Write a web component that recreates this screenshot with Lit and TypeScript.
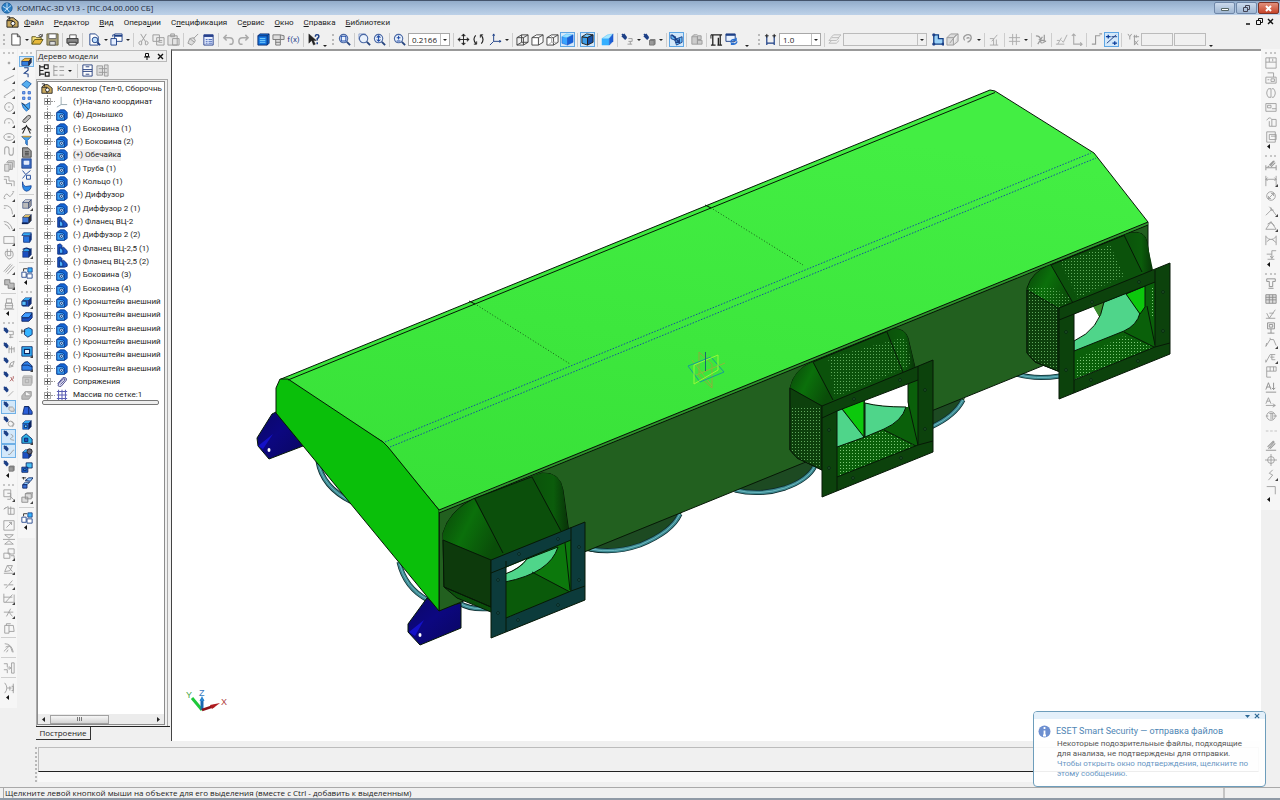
import { LitElement, html, svg, css, nothing } from "lit";
import { customElement } from "lit/decorators.js";
import { classMap } from "lit/directives/class-map.js";

const G = "#9a9a9a";
const K = "#222";
const N = "#1c3f86";
const D = "#1c4fc0";
const L = "#35b4ff";

const p = (d: string, stroke = G, fill = "none", w = 1) =>
  svg`<path d=${d} stroke=${stroke} fill=${fill} stroke-width=${w}></path>`;

/* Solid in three shades: front, top and side faces. */
const solid = (front = D, top = L, side = "#12307c") =>
  svg`${p("M2 5h7v7H2z", "#0c2460", front, 0.6)}${p("M2 5l3-3h7l-3 3z", "#0c2460", top, 0.6)}${p("M9 5l3-3v7l-3 3z", "#0c2460", side, 0.6)}`;

const pin = svg`${p("M1 1l5 5M1 3l4 4M3 1l3 4", N, "none", 1.6)}`;

const loupe = (inner = "") =>
  svg`<circle cx="6" cy="6" r="4.5" stroke="#4a68a4" fill="#e9f1fc" stroke-width="1.2"></circle>${p("M9.500 9.500L13 13", "#27457f", "none", 2)}${inner ? p(inner, "#1f4ba8", "none", 1.1) : nothing}`;

const ICONS: Record<string, unknown> = {
  "new": p("M3 1h6l3 3v9H3zM9 1v3h3", "#444", "#fff"),
  "open": svg`${p("M1 12V4h4l1 1h5v2", "#5d5418", "#f8e27a")}${p("M1 12l3-5h9l-3 5z", "#5d5418", "#e8b93a")}${p("M8 3q3-3 4 0M12 1v3h-3", "#333")}`,
  "save": svg`${p("M1 1h12v12H1z", "#6a6238", "#a9a27c")}${p("M3 1h8v5H3z", "#666", "#fff")}${p("M4 9h6v4H4z", "#555", "#ddd")}`,
  "print": svg`${p("M4 6V2h7v4", "#555", "#fff")}${p("M1 6h12v5H1z", "#333", "#888")}${p("M3 10h8v3H3z", "#333", "#ddd")}`,
  "preview": svg`${p("M2 1h6l3 3v9H2z", N, "#fff")}<circle cx="7.500" cy="7.500" r="3" stroke=${N} fill="#bfe0ff"></circle>${p("M10 10l3 3", N, "none", 2)}`,
  "manager": svg`${p("M5 1h8v8H5z", N, "#fff")}${p("M5 3h8", N, "none", 2)}${p("M1 6h6v7H1z", N, "#e3edff")}${p("M3 4V2h2", N)}`,
  "cut": p("M4 1l5 8M10 1L5 9M5 9a2 2 0 1 0 0 3.500zM9 9a2 2 0 1 1 0 3.500z"),
  "copy": p("M1 2h7v7H1zM5 5h8v8H5zM7 8h4M7 10h4", G, "#eee"),
  "paste": p("M1 3h10v10H1zM4 1h4v3H4zM6 6h7v7H6z", G, "#e4e4e4"),
  "brush": p("M12 1L7 6M3 6l5 4-3 3-4-2zM3 6l4-1 2 3-1 2", G, "#ddd"),
  "props": svg`${p("M2 2h10v11H2z", "#26408c", "#e6eeff")}${p("M2 3h10", "#26408c", "none", 2.5)}${p("M4 7h2M7 7h4M4 9h2M7 9h4M4 11h2M7 11h4", "#4a68b8")}`,
  "undo": p("M5 2L2 5l3 3M2 5h6q4 0 4 4t-4 3", "#aaa", "none", 1.6),
  "redo": p("M9 2l3 3-3 3M12 5H6Q2 5 2 9t4 3", "#aaa", "none", 1.6),
  "libs": svg`${p("M1 3l2-2h10v10l-2 2H1z", "#0a2a70", "#1577e0")}${p("M1 3h10v10M11 3l2-2", "#0a2a70")}${p("M3 6h6M3 8h6M3 10h6", "#7fd4ff")}`,
  "vars": p("M1 2h8v5H1zM9 2l4 1v4H9M4 7v6h5V7M4 10h5", "#777", "#ddd"),
  "help": svg`${p("M2 1v10l3-3 2 5 2-1-2-4h3z", K, K, 0.5)}${p("M9 4q0-3 3-2 2 2-1 4v2M11 10v2", N, "none", 1.6)}`,
  "zsel": loupe("M3.500 3.500h5v5h-5z"),
  "zwin": svg`${p("M1 1h7v6H1z", "#8aa2d0")}${loupe()}`,
  "zall": loupe("M6 3v6M4 5l2-2 2 2M4 7l2 2 2-2"),
  "zin": loupe("M6 3v4M4 5h4M4 8.500h4"),
  "move": svg`${p("M7 1v12M1 7h12", K)}${p("M5 3l2-2 2 2zM5 11l2 2 2-2zM3 5L1 7l2 2zM11 5l2 2-2 2z", K, K, 0.6)}`,
  "orbit": svg`${p("M4 2.500Q0 7 4.500 12M9.500 2Q14 6.500 10 11.500", K, "none", 1.2)}${p("M2 12h3v-3M12 2H9v3", K)}`,
  "axes": svg`${p("M5 1v8h8M5 9l-4 4", N)}${p("M4 3l1-2 1 2M11 8l2 1-2 1", N)}`,
  "wire": p("M1 5h7v8H1zM1 5l5-3h7l-5 3M13 2v8l-5 3M6 2v8h7M6 10l-5 3", "#444"),
  "hid": p("M1 5h7v8H1zM1 5l5-3h7l-5 3M13 2v8l-5 3", "#444", "#fff"),
  "thin": svg`${p("M1 5h7v8H1zM1 5l5-3h7l-5 3M13 2v8l-5 3", "#444", "#fff")}${p("M6 3v7h6M6 10l-4 3", "#aaa")}`,
  "shade": svg`${p("M1 4l6 1v8l-6-2z", D, "#39a4ff", 0.5)}${p("M1 4l5-3 7 1-6 3z", L, "#9be1ff", 0.5)}${p("M7 5l6-3v8l-6 3z", D, "#1560d8", 0.5)}`,
  "shadew": svg`${p("M1 4l6 1v8l-6-2z", K, "#3d9de8")}${p("M1 4l5-3 7 1-6 3z", K, "#6fc6ff")}${p("M7 5l6-3v8l-6 3z", K, "#1450a8")}`,
  "persp": svg`${p("M1 6h8v7H1z", L, "#36b0ff", 0.4)}${p("M1 6l6-4 6-1-4 5z", L, "#a5e8ff", 0.4)}${p("M9 6l4-5v8l-4 4z", D, "#1c5fd6", 0.4)}`,
  "objs": svg`${pin}${p("M8 6h4v3H8M10 9v3M7 12h5", G)}`,
  "objs2": svg`${pin}${p("M7 8h5v5H7zM7 8l1-1h5v5l-1 1", "#777", "#999")}`,
  "simp": svg`${p("M1 2l5 2v4L1 6zM5 7l8-3v6l-6 3z", N, "#65b9f5")}${p("M2 2l8 8M10 6v4H6", N, "none", 1.5)}`,
  "drill": p("M2 4h6v8H2zM8 3h4v4H8zM8 8h5v4H8zM2 4l2-2h4", G, "#ccc"),
  "report": svg`${p("M1 2h12M3 2v11M1 13h5M9 5v8M8 13h5M11 2v11", K, "none", 1.4)}${p("M1 2v4", K)}`,
  "refresh": svg`${p("M1 1h10v8H1z", N, "#e8f2ff")}${p("M1 2h10", N, "none", 2)}${p("M6 10q1-4 6-3M13 9q-1 4-6 3M12 5v3h-3M7 13v-2h3", "#2a70d0", "none", 1.4)}`,
  "step": svg`${p("M3 3v10M11 3v10M3 11h8", N, "none", 1.3)}${p("M1 3h4M3 1v4M9 3h4M11 1v4", K)}`,
  "layers": p("M1 8l3-3h8l-3 3zM1 11l3-3M1 11h8l3-3M3 5l3-3h8l-3 3", "#b8b8b8"),
  "sketch": svg`${p("M3 2v10h10V6H8V2z", "#123f86", "#9cd2f7", 1.4)}${p("M2 1h2v2H2zM2 11h2v2H2zM12 11h2v2h-2z", N, N)}`,
  "sk2": p("M1 5h7v8H1zM1 5l4-4h8l-5 4M13 1v8l-5 4M4 11l7-9", G, "#ddd"),
  "clip": p("M4 8q-3-4 2-6 5-1 5 3 0 3-4 5M6 6q2-2 3 0", G, "none", 1.4),
  "ortho": p("M4 9l6-7M2 6h4v7M2 13h9M9 7v6", "#aaa"),
  "grid": p("M5 1v12M9 1v12M1 5h12M1 9h12", "#aaa"),
  "snap": p("M1 3q5 0 5 5t5 1M3 12l5-8M10 2v6h-4M4 7l8 2", G, "none", 1.3),
  "lcs": p("M1 12h9M3 12l4-7M7 8l2 2 4-8M2 8h3", "#aaa"),
  "lcs2": p("M4 1v11h9M2 3l2-2 2 2M11 10l2 2-2 2", "#aaa", "none", 1.2),
  "round": p("M2 12h4V3h5M10 1h3", G, "none", 1.2),
  "cursor": svg`${p("M1 4h5M3.500 2v4M8 11h5M10.500 9v4", "#0d3f9c", "none", 1.4)}${p("M2 11L12 2M7 4h6", N)}`,
  "xy": p("M1 1l2 3 2-3M3 4v3M8 2v11M10 2v3M7 4h6M8 8l4 5M12 8l-4 5", "#999"),
  // drawing tools
  "point": p("M6 6h2v2H6z", G, G, 0.6), "line": p("M1 10L13 4"), "seg": p("M1 11L12 4M1 12h2M11 3h2v2"),
  "circle": svg`<circle cx="7" cy="7" r="5" stroke=${G} fill="none"></circle>${p("M6 7h2")}`,
  "arc": p("M2 9Q1 3 7 3q5 1 5 6M6 8h2"), "ell": svg`<ellipse cx="7" cy="7" rx="6" ry="4" stroke=${G} fill="none"></ellipse>${p("M5 7h4M7 6v2")}`,
  "spl": p("M2 11V5q0-3 2.500-3T7 5v4q0 3 2.500 3T12 9V3", "#a4a4a4", "none", 1.2), "book": p("M2 5h5v8H2zM5 3h6v8H7M4 3l2-2h7v8M9 5v6", G, "#ddd"),
  "offs": p("M1 2h6v5h6v6M1 5h3v5h6v3"), "wave": p("M1 9q3-7 5-3t6-3M1 10h2M11 2h2"), "fil": p("M1 2h4q6 2 6 10M1 5h2"),
  "fil2": p("M1 3q7 0 10 9M2 6q4 1 6 6"), "rect": p("M1 3h12v8H1z"), "hatch": p("M3 4h8q3 7-4 9Q1 9 3 4M5 1v8M9 1v8M5 9h4"),
  "par": p("M1 10L9 1M5 13l8-9M3 11l8-9"), "uni": p("M2 2h6v4h5v6H6V8H2z", "#777", "#bbb"), "stamp": p("M4 1h6v5H4zM2 9h10M3 6h8v6H3zM1 13h12"),
  // snaps
  "p1": svg`${pin}${p("M7 5h5v4H7M9 9v4M7 12h5")}`, "p2": svg`${pin}${p("M7 5v8M10 5v8M13 6v6M7 8h6")}`,
  "p3": svg`${pin}${p("M7 12l2-5 4-2-2 6zM8 9l4 2")}`, "p4": svg`${pin}${p("M8 12l3-3M9 7l3 5M12 6v3", "#a55")}`,
  "p5": svg`${pin}${p("M6 12L12 6", "#aaa")}`, "p6": svg`${pin}${p("M7 7h4l2 2v3H9l-2-2z", G, "#ddd")}`,
  "p7": svg`${pin}<circle cx="9" cy="9" r="3" stroke=${G} fill="none"></circle>${p("M9 6l4 3-2 4")}`,
  "p8": svg`${pin}${p("M9 5q5 2 1 4t3 3", G)}`, "p9": svg`${pin}${p("M6 11h2l4-5h1")}`,
  // editing
  "e1": p("M1 1h8v8H1zM5 5h4v7H5M8 8l5 5"), "e2": p("M1 6l5-3v9M6 5h7v7H6M1 6l2-2M9 3v9"), "e3": p("M1 2h12v11H1zM4 10l6-6M7 4h3v3"),
  "e4": p("M2 2h10L7 6zM2 13h10L7 9zM0 7.500h14"), "e5": p("M6 1h7v6H6zM1 6h7v6H1zM9 9h4v4"), "e6": p("M1 12h12M2 10l3-7h6L8 9zM5 3l6 7"),
  "e7": p("M1 8h4M7 8h5M3 12l8-9"), "e8": p("M1 2v10h12M3 12L11 3M13 3v9M1 6h10"), "e9": p("M1 6h11M4 11l5-9M7 6l4 5"),
  "e10": p("M2 4h5v9H2zM7 4h5l1 7H7M4 4V2h5"), "e11": p("M2 2q8 0 10 10M3 6q4-3 6 0l2 6M1 11l6-6M6 9l-2 3"), "e12": p("M1 2h4v4M1 9h4v4M5 7h4M10 1v12h3V1zM7 5l2 2-2 2"),
  "e13": p("M2 1q5 6 0 12M5 7h5M8 5v5M10 5h2v5h-2M12 2v11"),
  // modelling
  "asm": svg`${p("M1 6l4-3h8l-3 4H1z", "#805a10", "#f0b840")}${p("M1 7h9v5H1z", N, "#3380e0")}${p("M10 7l3-4v5l-3 4z", K, "#1d3a80")}`,
  "crv": p("M4 1h5v3L4 8l5 1v4", N, "none", 1.3), "srf": p("M1 7l6-5 6 4-5 6z", "#1450a0", "#55aef0"),
  "arr": svg`${p("M2 2h3v3H2zM9 2h3v3H9zM2 9h3v3H2zM9 9h3v3H9z", "#2d62c8", "#7baaf0")}`,
  "aux": svg`${p("M1 3l5 2 5-3v7l-4 4-4-4z", "#1058b0", "#48a8f4")}${p("M1 2l9 9", K)}`,
  "mate": p("M3 9l6-6q4-1 3 3l-6 6q-4 1-4-2l6-6", "#555", "#bbb", 1.2), "meas": p("M2 12l5-10 5 10M1 7l6-4 6 5", K, "none", 1.3),
  "filt": svg`${p("M1 2h12L8 7v6l-2-2V7z", "#1450a0", "#42a5f5")}${p("M2 2h10", "#b94", "none", 2)}`,
  "doc": p("M2 1h7l4 4v8H2zM5 6h5M5 8h5M5 10h5", "#333", "#999"), "spec": svg`${p("M1 1h12v12H1z", N, "#3b6ac0")}${p("M4 4h6v4H4z", "#fff", "#dfeaff")}`,
  "elem": p("M2 2l4 5-4 5M6 7l6-5M7 8h5v5H7z", "#234b9a", "none", 1.2), "sheet": svg`${p("M2 1q0 5 4 6l7-1q0 6-6 7-6-1-5-12z", "#0d3a90", "#2e8ce8")}`,
  "s0": solid("#bbb", "#ddd", "#999"), "s1": svg`${solid("#3f78d8", "#f0d070", "#333")}${p("M1 12h7", "#0b2055", "none", 2)}`,
  "s2": svg`${p("M3 1h9l-2 3H1z", N, L)}${p("M3 5h7v7H3z", N, "#2874e0")}${p("M10 5l2-3v7l-2 3z", N, "#12307c")}`,
  "s3": svg`${solid()}${p("M2 3q5-4 9 1v3", "#0a2a70", "none", 1.4)}`, "s4": svg`${p("M1 6h5v6H1zM7 8h6v5H7z", N, "#fff")}${p("M8 1h5v5H8z", N, L)}${p("M3 5V2h4", K)}`,
  "s5": svg`${solid()}${p("M1 6h5v5H1z", "#0c2460", "#58c0ff")}`, "s6": svg`${p("M1 6l4-4h8l-3 6H1z", "#0c2460", "#3f9cff")}${p("M1 8h8l4-5v5l-4 4H1z", "#0c2460", "#1d50c0")}`,
  "s7": svg`${p("M4 4l5-2 4 2v6l-5 3-4-3z", "#0c2460", L)}${p("M1 6h4M1 4v5", K)}`, "s8": svg`${p("M1 2h12v11H1z", "#0c2460", L)}${p("M4 5h6v5H4z", "#0c2460", "#eaf6ff", 1.4)}`,
  "s9": svg`${p("M1 12V6q3-5 7-4l5 5v5z", "#0c2460", "#2f80e8")}${p("M1 6h7l5 2", "#0c2460")}`, "s10": p("M2 3h10v9H2zM5 5h4v4H5zM2 3l1-2h10v9", "#aaa", "#ccc"),
  "s11": p("M1 8l4-5h7v5l-3 4H1zM5 3v5h7", "#999", "#bbb"), "s12": svg`${p("M2 12l2-9h5l4 6v3z", "#0c2460", "#2b5fd8")}${p("M4 3h5v9", "#0c2460")}`,
  "s13": svg`${solid("#1c78e8", L, "#0c2460")}${p("M4 7h3v3H4z", "#0c2460", "#7fe0ff")}`, "s14": svg`${p("M1 12V5l5-4 7 6v5z", "#0c2460", "#2fb4e8")}${p("M4 6h4v4H4z", "#0c2460", "#1c4fc0")}`,
  "s15": svg`${solid()}<circle cx="10" cy="4" r="3" stroke="#222" fill="#667"></circle>`, "s16": svg`${p("M6 1h7v6H6z", "#0c2460", "#4bc0f5")}${p("M1 6h7v6H1z", "#0c2460", "#1f66d8")}${p("M3 8h3v2H3z", "#0c2460", L)}`,
  "s17": svg`${p("M5 4l4-3h5l-3 4zM2 9l3-3h5l-3 3z", "#0c2460", "#8cc8ff")}${p("M2 9h5v4H2z", "#0c2460", "#3a70d8")}${p("M1 1h5M3 0v3", K)}`,
  "s18": p("M5 2h7v6H5zM1 6h7v6H1zM5 2l2-1h7v6", "#888", "#ddd"),
  // annotation
  "a1": p("M1 1h12v12H1zM1 6h12M5 1v5M9 2v3"), "a2": p("M1 6h12v7H1zM3 1h7v5M7 8h4v3H7zM3 9h2"), "a3": p("M4 2Q0 7 4 12h3V2zM8 2h2q4 5 0 10H8"),
  "a4": p("M1 3h12v9H1zM3 5h4v3H3zM8 9h5"), "a5": p("M2 5q3-5 6-1v8H5V6M8 4h5v8H8"), "a6": p("M2 1h10v12H2zM5 4h8v6H5zM7 6h6"),
  "b1": p("M1 9h12M1 6v6M13 6v6M3 8l2-1M6 7l5-6M7 8l5-5M5 6l5-5", "#999", "none", 1.2), "b2": p("M1 1v12M13 1v12M1 5h12M3 3L1 5l2 2M11 3l2 2-2 2"),
  "b3": svg`<circle cx="7" cy="7" r="5" stroke=${G} fill="none"></circle>${p("M4 10l6-6M4 7v3h3M7 4h3v3")}`, "b4": p("M1 12l7-7 5 7M8 5L5 2M7 3v3h3"),
  "b5": p("M1 12l6-9 6 9M1 12h12M3 6q4-4 8 2"), "b6": p("M1 2v11M13 2v11M1 3q6 7 12 0M2 9l4-3M8 6l5 4"), "b7": p("M8 2v9M8 11l-2-3M8 11l2-3M3 12h8M8 2h5M2 6h6"),
  "c1": p("M2 1h10v3H9v6H5V4H2zM4 12h6", "#888"), "c2": p("M1 2h12v10H1zM1 5h12M1 8h12M5 2v10M9 2v10", "#888", "#ddd"), "c3": p("M2 6l3 6 7-10M1 12h11M5 6h5"),
  "c4": p("M3 1h8v7H3zM5 3h4v3H5zM7 8v5M3 13h8", "#888"), "c5": p("M1 11l5-8h4l3 7M1 11l1-4M6 3V1"), "c6": p("M1 12l5-9h6M1 12V9M6 6h5M8 3v6h4"),
  "c7": p("M2 1v12M2 1h11v5H2M6 1v5M10 1v5M2 13h5"), "c8": p("M1 10l3-8 3 8M2 7h4M10 2v8M8 8l2 2 2-2M1 13h12", "#888"), "c9": p("M1 9l3-7 3 7M2 6h4M1 11h11M9 9l3 2-3 2", "#999"),
  "c10": svg`<circle cx="7" cy="7" r="5" stroke=${G} fill="none"></circle>${p("M1 7h3M7 4v7M9 4v7M5 4h5M10 7h4")}`,
  "dash": p("M1 7h3M6 7h3M11 7h3", "#bbb"),
  "d1": p("M1 12h12M4 10l7-8M6 10l6-6M3 8l7-7", "#999", "none", 1.3), "d2": svg`<circle cx="7" cy="7" r="4" stroke=${G} fill="none"></circle>${p("M7 0v14M0 7h14")}`,
  "d3": p("M9 1L5 5l4 2-5 6", "#999"), "d4": p("M2 3h10v9"),
  // model tree
  "pan1": p("M3 1v12M3 3h5M3 7h4M3 11h5M8 1h4v4H8zM9 9h4v4H9z", "#222", "none", 1.3), "pan2": p("M2 1v12M2 3h4M2 7h4M2 12h4M8 3h5M8 7h5M8 12h5", "#999"),
  "pan3": svg`${p("M2 1h10v12H2z", "#27407e", "#fff")}${p("M2 6h10M2 8h10M5 3h4M5 11h4", "#27407e")}`, "pan4": p("M1 2h6v10H1zM9 1h4v12H9zM3 5h9M3 9h9", "#999", "#ddd"),
  "root": svg`${p("M1 12V5q2-4 7-3l5 4v6z", "#222", "#c9a95e")}${p("M1 5h6v7", "#222")}<circle cx="7.500" cy="8" r="2.200" stroke="#222" fill="#fff"></circle>${p("M1 1h3v3", "#222")}`,
  "origin": p("M6 1v9h7M6 10l-5 3", "#8fa0a8"),
  "part": svg`${p("M1 4l4-3h5l3 3v7l-3 2H1z", "#0b3a90", "#1566d6")}${p("M1 4h6l3 2v7H1z", "#0b3a90", "#3aa2f7")}<circle cx="6.500" cy="8.500" r="2.300" stroke="#0a2c78" fill="#bfe6ff"></circle><circle cx="6.500" cy="8.500" r=".8" fill="#0a2c78"></circle>`,
  "flange": svg`${p("M2 2l3-1 2 2v3l2-1 4 4v3l-3 1H2z", "#0a2c78", "#1a55c8")}${p("M4 5l4 3v4H4z", "#0a2c78", "#4cb0fa")}`,
  "mates": p("M2 9l6-7q5-1 4 3l-6 7q-5 1-3-3l6-6q2 0 1 2l-5 5", "#44468a", "#e6e4f6", 1.1),
  "mass": p("M3 1v12M7 1v12M11 1v12M1 3h12M1 7h12M1 11h12", "#5a5fb4", "none", 1.2),
};

const icon = (name: string, size = 14) =>
  html`<svg class="ico" width=${size} height=${size} viewBox="0 0 14 14" aria-hidden="true">${ICONS[name]}</svg>`;

const BASE = css`
  * { box-sizing: border-box; }
  button, input, select {
    font: inherit; color: inherit; margin: 0; padding: 0; border: 0; background: none; border-radius: 0;
  }
  .ico { display: block; flex: none; }
`;

/** A vertical strip of tool buttons. Groups are separated by "|", "<" (more) and ":" (grip). */
@customElement("tool-column")
class ToolColumn extends LitElement {
  static properties = { layout: { type: String }, label: { type: String } };
  declare layout: string;
  declare label: string;

  static styles = [BASE, css`
    :host { display: block; }
    .col { display: flex; flex-direction: column; align-items: stretch; padding: 1px 1px 4px; background: #f6f6f6; }
    .grip { height: 6px; display: flex; align-items: center; justify-content: center; }
    .grip::before { content: ""; width: 11px; border-top: 2px dotted #c6c6c6; }
    .line { height: 5px; display: flex; align-items: center; }
    .line::before { content: ""; flex: 1; border-top: 1px solid #cfcfcf; }
    .more { height: 9px; display: flex; align-items: flex-start; padding: 0 0 0 5px; }
    .set { display: flex; flex-direction: column; }
    .tool { flex: 1 1 0; min-height: 0; display: grid; place-items: center; position: relative; }
    .tool .ico { width: 12px; height: 12px; }
    .small .ico { width: 11px; height: 11px; }
    .on { background: #d3e8fa; outline: 1px solid #6fb0e6; outline-offset: -1px; }
    .sub::after {
      content: ""; position: absolute; right: 1px; bottom: 1px;
      border-left: 3px solid transparent; border-bottom: 3px solid #444;
    }
  `];

  render() {
    const parts = this.layout.split(/\s+(?=[|<:])|(?<=[|<:])\s+/);
    return html`<div class="col" role="toolbar" aria-orientation="vertical" aria-label=${this.label}>
      ${parts.map((part) => {
        if (part === "|") return html`<div class="line"></div>`;
        if (part === ":") return html`<div class="grip"></div>`;
        if (part === "<") return html`<button class="more" aria-label="Ещё"><svg width="4" height="5"><path d="M3 0v5L0 2.500z" fill="#111"></path></svg></button>`;
        const small = part.startsWith("~");
        const names = part.replace("~", "").trim().split(/\s+/);
        const height = Math.round(names.length * (small ? 11.35 : 14.67));
        return html`<div class=${classMap({ set: true, small })} style="height:${height}px">
          ${names.map((n) => {
            const name = n.replace(/[+*]/g, "");
            return html`<button class=${classMap({ tool: true, on: n.includes("*"), sub: n.includes("+") })}
              aria-label=${name}>${icon(name, 12)}</button>`;
          })}
        </div>`;
      })}
    </div>`;
  }
}

/** Shaded three-dimensional view of the assembly. */
@customElement("model-view")
class ModelView extends LitElement {
  static styles = css`
    :host { display: block; background: #fff; overflow: hidden; }
    svg { display: block; width: 100%; height: 100%; }
    .edge { fill: none; stroke: #061806; stroke-width: 1; }
    .face { stroke: #061806; stroke-width: 1; }
    .axis { font: 9px "Liberation Sans", Arial, sans-serif; }
  `;

  private ring(d: string) {
    return svg`<path d=${d} fill="none" stroke="#0d2a2c" stroke-width="5"></path>
      <path d=${d} fill="none" stroke="#3c8890" stroke-width="3.500"></path>
      <path d=${d} fill="none" stroke="#6cb8c0" stroke-width="1"></path>`;
  }

  private holes(points: number[][], color: string) {
    return points.map(([x, y]) => svg`<circle cx=${x} cy=${y} r="1.300" fill=${color} stroke="#031a10" stroke-width=".8"></circle>`);
  }

  render() {
    return html`<svg viewBox="172 51 1089 690" preserveAspectRatio="xMinYMin meet" role="img" aria-label="Коллектор">
      <defs>
        <linearGradient id="top" x1="0" y1="1" x2=".3" y2="0">
          <stop offset="0" stop-color="#37e037"></stop><stop offset="1" stop-color="#43ee43"></stop>
        </linearGradient>
        <linearGradient id="cone" x1="0" y1="0" x2="1" y2=".5">
          <stop offset="0" stop-color="#0a4309"></stop><stop offset=".5" stop-color="#0b700b"></stop><stop offset="1" stop-color="#0a4d09"></stop>
        </linearGradient>
        <linearGradient id="roll" x1="0" y1="0" x2="1" y2="0">
          <stop offset="0" stop-color="#0b520b"></stop><stop offset=".6" stop-color="#0b5c0b"></stop><stop offset="1" stop-color="#083408"></stop>
        </linearGradient>
        <linearGradient id="foot" x1="0" y1="0" x2="1" y2="1">
          <stop offset="0" stop-color="#0b0766"></stop><stop offset=".45" stop-color="#0c0780"></stop><stop offset="1" stop-color="#0a0660"></stop>
        </linearGradient>
        <pattern id="dots" width="3" height="3" patternUnits="userSpaceOnUse">
          <rect width="1" height="1" fill="#7cc878"></rect>
        </pattern>
      </defs>

      ${this.ring("M318 461Q322 487 352 502")}
      ${this.ring("M399 562Q405 588 428 600")}
      <path d="M586 551Q612 556 640 546Q674 532 682 512L640 520z" fill="#1d4a22"></path>
      <path d="M733 491Q760 498 785 490Q808 481 816 460L770 470z" fill="#1d4a22"></path>
      <path d="M930 428Q958 416 965 398L930 405z" fill="#1d4a22"></path>
      ${this.ring("M590 549Q614 554 640 545Q672 532 680 514")}
      ${this.ring("M735 490Q760 496 785 488Q808 480 815 466")}
      ${this.ring("M931 427Q955 416 963 400")}
      ${this.ring("M1016 374Q1035 380 1060 376")}
      ${this.ring("M459 603Q472 611 494 608")}

      <path class="face" d="M276 412L272 414L257 438L258 446L269 459L303 446z" fill="url(#foot)"></path>
      <path d="M258 446l15-12-10 15z" fill="#1411c8"></path><ellipse cx="269" cy="450" rx="1.500" ry="2" fill="#fff"></ellipse>
      <path class="face" d="M427 598L408 624L408 632L420 645L461 628L461 603L439 608z" fill="url(#foot)"></path>
      <path d="M409 632l15-12-9 16z" fill="#1411c8"></path><ellipse cx="420" cy="635" rx="1.500" ry="2" fill="#fff"></ellipse>

      <path class="face" d="M439 510L1148 222V323L439 611z" fill="#22601f"></path>
      <path class="face" d="M281 379L990 90L995 91L1094 153L1148 222L439 510L383 442z" fill="url(#top)"></path>
      <path class="face" d="M276 413V388L280 379H288L383 442L388 447L439 510V611z" fill="#0abf0a"></path>
      <path class="edge" d="M288 380L995 92.500M439 513L1148 225"></path>
      <path d="M439 511.500L1148 223.500" stroke="#2f9a2c" stroke-width="1.500"></path>
      <path d="M385 442L1091 153M390 447L1096 158" stroke="#1450a0" stroke-width="1" stroke-dasharray="1.500 1.500"></path>
      <path d="M472 302L570 364M708 206L803 265" stroke="#175a17" stroke-width="1" stroke-dasharray="1 2"></path>
      <path class="edge" d="M469 301l6 3M705 205l6 3"></path>

      <!-- first outlet -->
      <path class="face" d="M443 533Q449 511 473 499L542 473Q560 472 563 490L570 540L491 612L457 598L444 587z" fill="#0b4f0b"></path>
      <path d="M443 540V533Q449 511 474 499L503 553L491 560z" fill="url(#cone)"></path>
      <path d="M532 476L542 473Q560 472 563 490L568 529L561 531z" fill="url(#roll)"></path>
      <path class="face" d="M443 540L491 560V607L444 587z" fill="#0d3a0c"></path>
      <path class="edge" d="M475 499L503 553M532 477L561 531M444 587L491 607"></path>
      <path d="M505 566L571 539V592L505 619z" fill="#0a5a0a"></path>
      <path d="M558 545L570 540V592L532 572z" fill="#0c780c"></path>
      <path d="M505 568L527 559Q518 569 505 574z" fill="#fff"></path>
      <path class="face" d="M505 574Q520 569 527 559L558 547Q550 573 505 582z" fill="#4fd58a"></path>
      <path class="edge" d="M532 572L570 592M565 543L570 590"></path>
      <path class="face" d="M491 560L585 522V600L491 638zM506 567V618L571 591V540z" fill="#0c3b3b" fill-rule="evenodd"></path>
      <path class="edge" d="M491 573L506 567V561M571 540V527M571 591L585 586M506 618V632"></path>
      ${this.holes([[498, 580], [498, 613], [579, 547], [579, 580], [519, 554], [558, 539], [518, 620], [558, 605]], "#256060")}

      <!-- second outlet -->
      <path class="face" d="M790 388Q794 369 813 362L893 329Q905 328 908 338L918 380L822 470L797 458L790 450z" fill="#0b520b"></path>
      <path d="M790 388Q794 369 813 362L833 400L822 406z" fill="url(#cone)"></path>
      <path d="M887 332L893 329Q905 328 908 338L915 367L903 372z" fill="url(#roll)"></path>
      <path class="face" d="M790 388L822 406V470L797 458L790 450z" fill="#0d400c"></path>
      <path d="M790 408H822V468L797 458L790 448zM828 358L905 337L912 365L835 397z" fill="url(#dots)" opacity=".75"></path>
      <path class="edge" d="M813 362L833 400M887 332L903 372"></path>
      <path d="M836 410L918 378V446L836 478z" fill="#0a600a"></path>
      <path d="M838 447L884 430L916 446L838 477z" fill="url(#dots)"></path>
      <path d="M865 399L908 383V407Q880 407 865 403z" fill="#fff"></path>
      <path d="M842 408L864 399V437z" fill="#0cc80c"></path>
      <path d="M837 411L842 409L864 437L837 447z" fill="#4fd58a"></path>
      <path class="face" d="M865 403Q880 407 906 407Q902 421 884 429L865 437z" fill="#4fd58a"></path>
      <path class="edge" d="M864 399V437M837 447L865 437M842 409L864 437M908 383V402M884 430L916 446M908 402L918 445"></path>
      <path class="face" d="M822 406L933 360V452L822 497zM837 411V477L918 445V380z" fill="#0c420c" fill-rule="evenodd"></path>
      <path class="edge" d="M822 418L837 411M918 380V366M918 445L933 441M837 477V491"></path>
      ${this.holes([[829, 430], [829, 468], [925, 390], [925, 429], [854, 399], [900, 380], [853, 478], [901, 458]], "#2c6a2c")}

      <!-- third outlet -->
      <path class="face" d="M1027 288Q1032 271 1051 265L1130 233Q1145 230 1147 242L1153 280L1060 372L1035 362L1027 353z" fill="#0b520b"></path>
      <path d="M1027 290Q1032 271 1051 265L1073 303L1058 308z" fill="url(#cone)"></path>
      <path d="M1124 235L1130 233Q1145 230 1147 242L1153 270L1142 274z" fill="url(#roll)"></path>
      <path class="face" d="M1027 290L1058 308V371L1035 362L1027 353z" fill="#0d400c"></path>
      <path d="M1027 288L1050 286L1074 300L1058 308V370L1035 361L1027 352zM1060 262L1110 245L1124 276L1078 298z" fill="url(#dots)" opacity=".75"></path>
      <path class="edge" d="M1051 265L1073 303M1124 235L1142 272"></path>
      <path d="M1073 313L1155 281V348L1073 380z" fill="#0a600a"></path>
      <path d="M1075 360L1124 336L1154 347L1075 379zM1150 288h5v30h-5z" fill="url(#dots)"></path>
      <path d="M1074 314L1093 306L1100 318Q1090 335 1074 341z" fill="#fff"></path>
      <path d="M1093 306L1104 302V310L1100 318z" fill="#3a8a2c"></path>
      <path class="face" d="M1074 341Q1100 329 1104 302L1126 293L1140 313Q1137 325 1124 331L1074 351z" fill="#4fd58a"></path>
      <path class="face" d="M1126 294L1145 286V307L1140 314z" fill="#0cc80c"></path>
      <path class="edge" d="M1124 332L1154 347M1147 306L1155 345"></path>
      <path class="face" d="M1059 308L1170 263V354L1059 399zM1074 314V380L1155 347V282z" fill="#0c420c" fill-rule="evenodd"></path>
      <path class="edge" d="M1059 320L1074 314M1155 282V270M1155 347L1170 343M1074 380V393"></path>
      ${this.holes([[1066, 332], [1066, 370], [1163, 292], [1163, 331], [1092, 302], [1139, 282], [1091, 380], [1138, 361]], "#2c6a2c")}

      <!-- origin marker -->
      <g fill="none" stroke-width="1">
        <path d="M699 352V376L712 388V364z" stroke="#8cae3c"></path>
        <path d="M696 375L725 363M692 360L712 386" stroke="#8fb83c"></path>
        <path d="M688 366L711 357L724 372L700 382z" stroke="#189c98"></path>
        <path d="M694 365L718 355V370L694 384z" stroke="#98f838"></path>
        <path d="M705.500 352V371" stroke="#1a6a70"></path>
      </g>

      <!-- view axes -->
      <path d="M202 710L192 698" stroke="#1ec83a" stroke-width="3"></path>
      <path d="M202 710V699" stroke="#1868b0" stroke-width="3"></path><path d="M199.500 701L202 696L204.500 701z" fill="#2a86d0"></path>
      <path d="M202 710L214 706" stroke="#8c1418" stroke-width="2.500"></path><path d="M210 705L220 703L212 709z" fill="#b01c20"></path>
      <text class="axis" x="186" y="698" fill="#48a848">Y</text>
      <text class="axis" x="199" y="696" fill="#3878c0">Z</text>
      <text class="axis" x="221" y="705" fill="#b04040">X</text>
    </svg>`;
  }
}

const MENU: [string, string, string][] = [
  ["", "Ф", "айл"], ["", "Р", "едактор"], ["", "В", "ид"], ["Опера", "ц", "ии"], ["С", "п", "ецификация"],
  ["С", "е", "рвис"], ["", "О", "кно"], ["", "С", "правка"], ["", "Б", "иблиотеки"],
];

const TREE: [string, string][] = [
  ["origin", "(т)Начало координат"], ["part", "(ф) Донышко"], ["part", "(-) Боковина (1)"], ["part", "(+) Боковина (2)"],
  ["part", "(+) Обечайка"], ["part", "(-) Труба (1)"], ["part", "(-) Кольцо (1)"], ["part", "(+) Диффузор"],
  ["part", "(-) Диффузор 2 (1)"], ["flange", "(+) Фланец ВЦ-2"], ["part", "(-) Диффузор 2 (2)"],
  ["flange", "(-) Фланец ВЦ-2,5 (1)"], ["flange", "(-) Фланец ВЦ-2,5 (2)"], ["part", "(-) Боковина (3)"],
  ["part", "(-) Боковина (4)"],
  ...Array.from({ length: 6 }, (): [string, string] => ["part", "(-) Кронштейн внешний"]),
  ["mates", "Сопряжения"], ["mass", "Массив по сетке:1"],
];

/* Token meaning: "v" drop arrow, "|" divider, "_" spacer, ":" grip, "." overflow; "*" marks a pressed tool. */
const BAR_STD = ": new v open save | print | _ preview v manager v | cut copy paste | brush props | undo redo | libs vars fx | help .";
const BAR_VIEW = ": zsel | zwin zall | zin #scale | move orbit _ axes v | wire hid thin shade* | shadew* | persp | objs v objs2 v | simp* | drill | report refresh _ _ . _ _ :";
const BAR_STATE = "step #step | layers #layer _ sketch sk2 clip v | ortho | grid v | snap | lcs lcs2 | round cursor* | _ xy #x #y .";

@customElement("app-root")
class AppRoot extends LitElement {
  static styles = [BASE, css`
    :host {
      display: flex; flex-direction: column; height: 100vh; min-height: 480px; overflow: hidden; position: relative;
      background: #f0f0f0; color: #1c1c1c; font: 8px/12px Roboto, "Open Sans", sans-serif;
    }
    .title {
      display: flex; align-items: center; height: 15px; padding: 0 1px 0 1px; gap: 4px; border-top: 1px solid #44546c;
      background: linear-gradient(#92acca, #a9c1dc 50%, #bdd1e8); color: #1a2638; flex: none;
    }
    .title h1 { font: inherit; font-family: "Open Sans", sans-serif; margin: 0; flex: 1; }
    .win { display: flex; gap: 1px; height: 12px; }
    .win button {
      width: 21px; display: grid; place-items: center; border: 1px solid #6f87a8; border-radius: 2px;
      background: linear-gradient(#cbdaec, #9fb6d2);
    }
    .win .close { background: linear-gradient(#e0907c, #c8452a); border-color: #7c3226; }
    .menu { display: flex; align-items: center; height: 15px; padding: 0 4px 0 3px; flex: none; }
    .menu button { padding: 0 5px; white-space: nowrap; }
    .menu .doc { padding: 0 0 0 3px; }
    .menu .fill { flex: 1; }
    .menu .child { padding: 0 2px; }
    .grip { width: 8px; height: 12px; flex: none; display: grid; place-items: center; }
    .grip::before { content: ""; height: 11px; border-left: 2px dotted #b9b9b9; }
    .bars { display: flex; align-items: center; height: 19px; flex: none; }
    .bar { display: flex; align-items: center; flex: none; }
    .tool { width: 15px; height: 15px; display: grid; place-items: center; flex: none; }
    .tool .ico { width: 13px; height: 13px; }
    .fx { color: #27408c; }
    .on { background: #d3e8fa; outline: 1px solid #5ea6e4; outline-offset: -1px; }
    .drop { width: 7px; height: 15px; display: grid; place-items: center; flex: none; }
    .drop::before { content: ""; border: 2px solid transparent; border-top-color: #222; border-bottom: 0; }
    .rest { width: 8px; align-items: end; }
    .div { width: 5px; height: 14px; display: grid; place-items: center; flex: none; }
    .div::before { content: ""; height: 14px; border-left: 1px solid #cdcdcd; }
    .gap { width: 2px; flex: none; }
    .pick { display: flex; height: 13px; width: 42px; flex: none; margin: 0 1px; background: #fff; border: 1px solid #a8a8a8; }
    .pick input { width: 0; flex: 1; min-width: 0; padding: 0 3px; font-family: "Open Sans", sans-serif; }
    .pick .drop { width: 9px; height: 11px; border-left: 1px solid #c0c0c0; }
    .wide { width: 84px; background: #f0f0f0; border-color: #bbb; }
    .num { width: 32px; height: 13px; border: 1px solid #bbb; margin-right: 1px; flex: none; }
    .main { flex: 1; display: flex; min-height: 0; }
    .strip { flex: none; width: 17px; }
    .strip2 { width: 17px; margin-left: 1px; }
    .side { width: 135px; flex: none; display: flex; flex-direction: column; padding-left: 1px; }
    .head {
      display: flex; align-items: center; height: 12px; margin: 1px 3px 0 0; padding: 0 2px 0 1px; gap: 7px;
      border: 1px solid #b9b9b9; flex: none;
    }
    .head h2 { font: inherit; font-family: "Open Sans", sans-serif; margin: 0; flex: 1; white-space: nowrap; }
    .head button { display: grid; place-items: center; }
    .panbar { display: flex; align-items: center; height: 17px; flex: none; }
    .frame { flex: 1; display: flex; min-height: 0; padding: 0 2px 0 0; border: 1px solid #a9a9a9; border-width: 1px 1px 0; margin: 0 2px 0 0; background: #f0f0f0; }
    .tree { flex: 1; min-width: 0; display: flex; flex-direction: column; background: #fff; border: 1px solid #8c8c8c; margin: 1px 0 1px 0; }
    .rows { list-style: none; margin: 0; padding: 0; height: 320px; flex: none; display: flex; flex-direction: column; overflow: hidden; }
    .rows li { flex: 1 1 0; min-height: 0; display: flex; align-items: center; white-space: nowrap; overflow: hidden; padding-left: 18px; gap: 5px; position: relative; }
    .rows li.root { padding-left: 3px; gap: 4px; }
    .rows .ico { width: 12px; height: 12px; }
    .rows li:not(.root)::before { content: ""; position: absolute; left: 9px; top: 0; bottom: 0; border-left: 1px dotted #999; }
    .rows li:not(.root)::after { content: ""; position: absolute; left: 13px; width: 4px; border-top: 1px dotted #999; }
    .exp { position: absolute; left: 6px; width: 7px; height: 7px; border: 1px solid #aaa; background: #fff; z-index: 1; display: grid; place-items: center; }
    .exp svg { display: block; }
    .hot { background: #f0eeee; }
    .rail { height: 5px; margin: -2px 5px 0 4px; border: 1px solid #777; border-radius: 2px; background: #eee; flex: none; z-index: 2; }
    .blank { flex: 1; }
    .scroll { height: 10px; display: flex; align-items: center; background: #ececec; padding: 0 4px; gap: 4px; flex: none; }
    .scroll svg { display: block; }
    .thumb { width: 59px; height: 9px; margin-right: auto; border: 1px solid #a2a2a2; background: linear-gradient(#f6f6f6, #d4d4d4); display: grid; place-items: center; }
    .tabs { height: 15px; border-top: 1px solid #222; flex: none; display: flex; }
    .tabs button { border: 1px solid #333; border-width: 0 1px 1px 0; height: 13px; width: 55px; font-family: "Open Sans", sans-serif; }
    .view { flex: 1; min-width: 0; border-left: 1px solid #444; border-top: 2px solid #999; margin-left: 1px; }
    .right { width: 19px; flex: none; }
    .props { flex: none; margin: 6px 21px 5px 35px; height: 35px; border-left: 2px dotted #b8b8b8; padding-left: 1px; display: flex; flex-direction: column; }
    .props::before { content: ""; height: 23px; background: #f0f0f0; border: 1px solid #bcbcbc; border-bottom-color: #222; }
    .props::after { content: ""; flex: 1; background: #f8f8f8; }
    .status { height: 13px; flex: none; display: flex; align-items: center; border-top: 1px solid #a9a9a9; border-bottom: 2px solid #8f9aa6; padding-left: 3px; font-family: "Open Sans", sans-serif; }
    .status span { flex: 1; border-left: 1px solid #aaa; padding-left: 1px; white-space: nowrap; line-height: 10px; }
    .status i { width: 57px; border-left: 2px solid #c4c4c4; height: 10px; }
    .toast {
      position: absolute; right: 14px; bottom: 13px; width: 233px; height: 76px; border: 1px solid #6d9dbb; border-radius: 4px;
      background: rgba(255, 255, 255, .92); display: flex; flex-direction: column; z-index: 3;
    }
    .bar2 { height: 7px; background: #e4f0fa; border-radius: 3px 3px 0 0; display: flex; justify-content: flex-end; gap: 4px; padding-right: 5px; align-items: center; }
    .bar2 button { display: grid; place-items: center; }
    .msg { display: grid; grid-template-columns: 13px 1fr; gap: 0 4px; padding: 4px 5px 0 4px; align-items: center; }
    .msg h3 { font: 9px/16px Roboto, "Open Sans", sans-serif; color: #4f86b4; margin: 0 0 0 1px; white-space: nowrap; }
    .msg p { grid-column: 2; margin: 0 0 0 2px; line-height: 10px; color: #555; white-space: nowrap; }
    .msg a { color: #6a97c4; text-decoration: none; }
  `];

  private token(t: string) {
    switch (t) {
      case "v": return html`<button class="drop" aria-label="Список"></button>`;
      case "|": return html`<span class="div"></span>`;
      case "_": return html`<span class="gap"></span>`;
      case ":": return html`<span class="grip"></span>`;
      case ".": return html`<button class="drop rest" aria-label="Параметры панели"></button>`;
      case "fx": return html`<button class="tool fx">f(x)</button>`;
      case "#scale": return this.pick("Масштаб", "0.2166");
      case "#step": return this.pick("Шаг курсора", "1.0");
      case "#layer": return this.pick("Слой", "", true);
      case "#x": return html`<input class="num" aria-label="X" disabled />`;
      case "#y": return html`<input class="num" aria-label="Y" disabled />`;
    }
    const name = t.replace("*", "");
    return html`<button class=${classMap({ tool: true, on: t.endsWith("*") })} aria-label=${name}>${icon(name)}</button>`;
  }

  private pick(label: string, value: string, wide = false) {
    return html`<span class=${classMap({ pick: true, wide })}>
      <input aria-label=${label} .value=${value} ?disabled=${wide} /><button class="drop" aria-label="Список"></button></span>`;
  }

  private bar(tokens: string, label: string) {
    return html`<div class="bar" role="toolbar" aria-label=${label}>${tokens.split(" ").map((t) => this.token(t))}</div>`;
  }

  render() {
    const cross = (c: string, w = 1.4) => svg`<path d="M1 1l5 5M6 1l-5 5" stroke=${c} stroke-width=${w}></path>`;
    const restore = (c: string) => svg`<path d="M2.500 2.500v-2h4v4h-2M.5 2.500h4v4h-4z" stroke=${c} fill="none"></path>`;
    return html`
      <header class="title">
        <svg width="12" height="12" viewBox="0 0 14 14" aria-hidden="true">
          <circle cx="7" cy="7" r="6" fill="#2b7fc4" stroke="#1c5a96"></circle>
          <path d="M2 5l5 3 5-4M4 11l3-3 3 4M7 1v7" stroke="#d6ecff" fill="none"></path>
        </svg>
        <h1>КОМПАС-3D V13 - [ПС.04.00.000 СБ]</h1>
        <div class="win">
          <button aria-label="Свернуть"><svg width="8" height="7"><path d="M.5 3.500h7v2h-7z" fill="#fff" stroke="#566"></path></svg></button>
          <button aria-label="Развернуть"><svg width="8" height="7">${restore("#445")}</svg></button>
          <button class="close" aria-label="Закрыть"><svg width="7" height="7">${cross("#fff", 2)}</svg></button>
        </div>
      </header>
      <nav class="menu">
        <button class="doc" aria-label="Документ">${icon("root", 13)}</button>
        ${MENU.map(([a, u, b]) => html`<button>${a}<u>${u}</u>${b}</button>`)}
        <span class="fill"></span>
        <button class="child" aria-label="Свернуть документ"><svg width="7" height="7"><path d="M1 6h4" stroke="#111" stroke-width="1.500"></path></svg></button>
        <button class="child" aria-label="Восстановить документ"><svg width="7" height="7">${restore("#111")}</svg></button>
        <button class="child" aria-label="Закрыть документ"><svg width="7" height="7">${cross("#111")}</svg></button>
      </nav>
      <div class="bars">
        ${this.bar(BAR_STD, "Стандартная")}${this.bar(BAR_VIEW, "Вид")}${this.bar(BAR_STATE, "Текущее состояние")}
      </div>
      <div class="main">
        <tool-column class="strip" label="Геометрия"
          layout=": point+ line+ seg+ circle+ arc+ ell+ spl book offs wave+ fil+ fil2+ rect+ hatch par+ uni+ | stamp < : p1 p2 p3 p4 p5 p6* p7 p8* p9* objs2 < : e1+ e2 e3 e4 e5+ e6+ e7+ e8+ e9+ e10 | e11 | e12 | e13 <"></tool-column>
        <tool-column class="strip strip2" label="Редактирование сборки"
          layout=": ~asm* crv srf arr aux mate meas filt doc spec elem sheet | s0+ s1 | s2 s3+ | s4 < : s5+ s6 s7 | s8+ s9+ s10 s11 s12 s13 s14+ s15 s16 s17 s18+ | s4 <"></tool-column>
        <aside class="side">
          <div class="head">
            <h2>Дерево модели</h2>
            <button aria-label="Закрепить"><svg width="6" height="7"><path d="M1.500 .5h3v3h-3zM0 4h6M3 4v3" stroke="#111" fill="none"></path></svg></button>
            <button aria-label="Закрыть панель"><svg width="7" height="7">${cross("#111")}</svg></button>
          </div>
          <div class="panbar">
            ${["pan1", "pan2", "v", "_", "|", "pan3", "pan4"].map((t) => this.token(t))}
          </div>
          <div class="frame">
            <div class="tree">
              <ul class="rows">
                <li class="root">${icon("root", 12)}<span>Коллектор (Тел-0, Сборочнь</span></li>
                ${TREE.map(([ic, name]) => html`<li>
                  <button class="exp" aria-label="Раскрыть"><svg width="5" height="5"><path d="M0 2.500h5M2.500 0v5" stroke="#555"></path></svg></button>
                  ${icon(ic, 12)}<span class=${classMap({ hot: name === "(+) Обечайка" })}>${name}</span></li>`)}
              </ul>
              <div class="rail"></div>
              <div class="blank"></div>
              <div class="scroll">
                <svg width="4" height="5"><path d="M3 0v5L0 2.500z" fill="#222"></path></svg>
                <div class="thumb"><svg width="6" height="4"><path d="M.5 0v4M2.500 0v4M4.500 0v4" stroke="#777"></path></svg></div>
                <svg width="4" height="5"><path d="M1 0v5l3-2.500z" fill="#222"></path></svg>
              </div>
            </div>
          </div>
          <div class="tabs"><button>Построение</button></div>
        </aside>
        <model-view class="view"></model-view>
        <tool-column class="right" label="Обозначения"
          layout=": a1 a2 a3 a4 a5 a6 < : b1 b2+ b3 b4+ b5+ b6 b7 < : c1 c2 c3 c4 c5+ c6+ c7 c8 c9 c10 dash d1 d2 d3+ d4 <"></tool-column>
      </div>
      <section class="props" aria-label="Панель свойств"></section>
      <footer class="status">
        <span>Щелкните левой кнопкой мыши на объекте для его выделения (вместе с Ctrl - добавить к выделенным)</span><i></i>
      </footer>
      <aside class="toast">
        <div class="bar2">
          <button aria-label="Меню"><svg width="5" height="4"><path d="M0 1h5L2.500 4z" fill="#2f6a96"></path></svg></button>
          <button aria-label="Закрыть сообщение"><svg width="6" height="6" viewBox="0 0 7 7">${cross("#2f6a96")}</svg></button>
        </div>
        <div class="msg">
          <svg width="13" height="13" viewBox="0 0 13 13" aria-hidden="true"><circle cx="6.500" cy="6.500" r="6" fill="#6d8fd0"></circle>
            <path d="M6.500 2v2M6.500 5.500v5M5 10.500h3" stroke="#fff" stroke-width="1.800"></path></svg>
          <h3>ESET Smart Security — отправка файлов</h3>
          <p>Некоторые подозрительные файлы, подходящие<br />для анализа, не подтверждены для отправки.<br />
            <a href="#">Чтобы открыть окно подтверждения, щелкните по<br />этому сообщению.</a></p>
        </div>
      </aside>
    `;
  }
}
